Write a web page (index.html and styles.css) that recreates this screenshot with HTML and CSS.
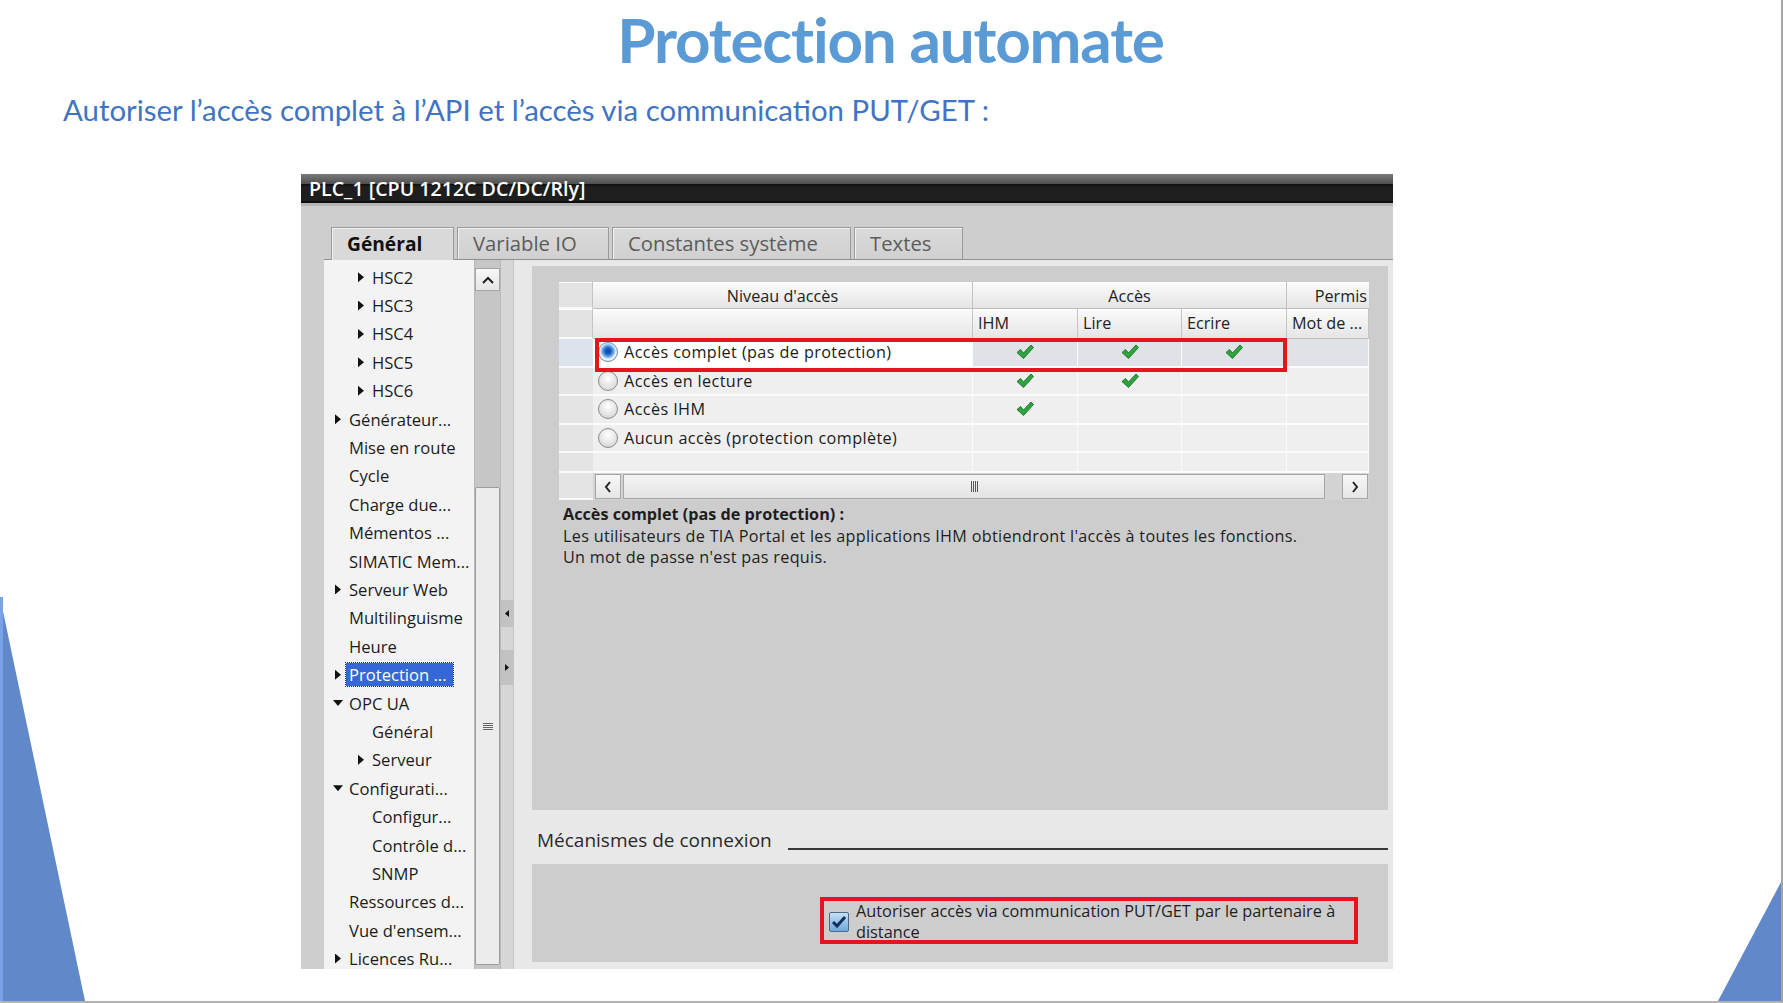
FILE: index.html
```html
<!DOCTYPE html>
<html>
  <head>
    <meta charset="utf-8">
    <title>Protection automate</title>
    <link rel="stylesheet" href="styles.css">
  </head>
  <body>
    <div class="slide">
      <h1 class="title">Protection automate</h1>
      <p class="lead">Autoriser l’accès complet à l’API et l’accès via communication PUT/GET :</p>

      <div class="shot">
        <div class="titlebar">PLC_1 [CPU 1212C DC/DC/Rly]</div>

        <div class="tabs">
          <span class="tab tab-general active">Général</span>
          <span class="tab tab-io">Variable IO</span>
          <span class="tab tab-const">Constantes système</span>
          <span class="tab tab-texts">Textes</span>
        </div>

        <div class="workspace">
          <ul class="tree">
            <li class="l2 closed">HSC2</li>
            <li class="l2 closed">HSC3</li>
            <li class="l2 closed">HSC4</li>
            <li class="l2 closed">HSC5</li>
            <li class="l2 closed">HSC6</li>
            <li class="closed">Générateur...</li>
            <li>Mise en route</li>
            <li>Cycle</li>
            <li>Charge due...</li>
            <li>Mémentos ...</li>
            <li>SIMATIC Mem...</li>
            <li class="closed">Serveur Web</li>
            <li>Multilinguisme</li>
            <li>Heure</li>
            <li class="closed"><span class="sel">Protection ...</span></li>
            <li class="open">OPC UA</li>
            <li class="l2">Général</li>
            <li class="l2 closed">Serveur</li>
            <li class="open">Configurati...</li>
            <li class="l2">Configur...</li>
            <li class="l2">Contrôle d...</li>
            <li class="l2">SNMP</li>
            <li>Ressources d...</li>
            <li>Vue d'ensem...</li>
            <li class="closed">Licences Ru...</li>
          </ul>

          <div class="vscroll">
            <span class="sbtn up">
              <svg width="14" height="10" viewBox="0 0 14 10"><polyline points="2,8 7,3 12,8" fill="none" stroke="#222" stroke-width="2"/></svg>
            </span>
            <span class="track"></span>
            <span class="thumb">
              <svg width="10" height="9" viewBox="0 0 10 9"><path d="M0 1.5H10M0 3.5H10M0 5.5H10M0 7.5H10" stroke="#666" stroke-width="1"/></svg>
            </span>
          </div>

          <div class="splitter">
            <span class="grab grab-left"></span>
            <span class="grab grab-right"></span>
          </div>

          <div class="content">
            <div class="panel panel-top">
              <div class="grid-wrap">
                <div class="grid">
                  <div class="hc rh"></div>
                  <div class="hc center">Niveau d'accès</div>
                  <div class="hc center span3">Accès</div>
                  <div class="hc right">Permis</div>

                  <div class="hc rh"></div>
                  <div class="hc"></div>
                  <div class="hc">IHM</div>
                  <div class="hc">Lire</div>
                  <div class="hc">Ecrire</div>
                  <div class="hc">Mot de ...</div>

                  <div class="rh sel-row"></div>
                  <div class="dc level sel-first"><span class="radio on"></span>Accès complet (pas de protection)</div>
                  <div class="dc sel-row tickc"><svg class="tick" viewBox="0 0 18 16"><path d="M1 8.5 4.5 5.5 7.5 9 15 1 17.5 3.5 7.5 14.5Z"/></svg></div>
                  <div class="dc sel-row tickc"><svg class="tick" viewBox="0 0 18 16"><path d="M1 8.5 4.5 5.5 7.5 9 15 1 17.5 3.5 7.5 14.5Z"/></svg></div>
                  <div class="dc sel-row tickc"><svg class="tick" viewBox="0 0 18 16"><path d="M1 8.5 4.5 5.5 7.5 9 15 1 17.5 3.5 7.5 14.5Z"/></svg></div>
                  <div class="dc sel-row"></div>

                  <div class="rh"></div>
                  <div class="dc level"><span class="radio"></span>Accès en lecture</div>
                  <div class="dc tickc"><svg class="tick" viewBox="0 0 18 16"><path d="M1 8.5 4.5 5.5 7.5 9 15 1 17.5 3.5 7.5 14.5Z"/></svg></div>
                  <div class="dc tickc"><svg class="tick" viewBox="0 0 18 16"><path d="M1 8.5 4.5 5.5 7.5 9 15 1 17.5 3.5 7.5 14.5Z"/></svg></div>
                  <div class="dc"></div>
                  <div class="dc"></div>

                  <div class="rh"></div>
                  <div class="dc level"><span class="radio"></span>Accès IHM</div>
                  <div class="dc tickc"><svg class="tick" viewBox="0 0 18 16"><path d="M1 8.5 4.5 5.5 7.5 9 15 1 17.5 3.5 7.5 14.5Z"/></svg></div>
                  <div class="dc"></div>
                  <div class="dc"></div>
                  <div class="dc"></div>

                  <div class="rh"></div>
                  <div class="dc level"><span class="radio"></span>Aucun accès (protection complète)</div>
                  <div class="dc"></div>
                  <div class="dc"></div>
                  <div class="dc"></div>
                  <div class="dc"></div>

                  <div class="rh"></div>
                  <div class="dc"></div>
                  <div class="dc"></div>
                  <div class="dc"></div>
                  <div class="dc"></div>
                  <div class="dc"></div>

                  <div class="rh"></div>
                  <div class="hscroll">
                    <span class="sbtn">
                      <svg width="10" height="14" viewBox="0 0 10 14"><polyline points="7,2 3,7 7,12" fill="none" stroke="#222" stroke-width="2"/></svg>
                    </span>
                    <span class="hthumb">
                      <svg width="9" height="11" viewBox="0 0 9 11"><path d="M1.5 0V11M3.5 0V11M5.5 0V11M7.5 0V11" stroke="#555" stroke-width="1"/></svg>
                    </span>
                    <span class="hgap"></span>
                    <span class="sbtn">
                      <svg width="10" height="14" viewBox="0 0 10 14"><polyline points="3,2 7,7 3,12" fill="none" stroke="#222" stroke-width="2"/></svg>
                    </span>
                  </div>
                </div>
                <span class="mark mark-row"></span>
              </div>

              <div class="desc">
                <b>Accès complet (pas de protection) :</b><br>
                Les utilisateurs de TIA Portal et les applications IHM obtiendront l'accès à toutes les fonctions.<br>
                Un mot de passe n'est pas requis.
              </div>
            </div>

            <div class="section-head">
              <span>Mécanismes de connexion</span>
              <span class="rule"></span>
            </div>

            <div class="panel panel-bottom">
              <div class="mark-box">
                <span class="checkbox">
                  <svg width="20" height="20" viewBox="0 0 20 20"><path d="M4 10 8 14 16 5" fill="none" stroke="#12305e" stroke-width="3"/></svg>
                </span>
                <span class="cb-label">Autoriser accès via communication PUT/GET par le partenaire à distance</span>
              </div>
            </div>
          </div>
        </div>
      </div>

      <svg class="deco" width="1781" height="1001" viewBox="0 0 1781 1001">
        <polygon points="0,597 85,1001 0,1001" fill="#6188c9"/>
        <rect x="0" y="597" width="3" height="404" fill="#7aa2e6"/>
        <polygon points="1781,882 1781,1001 1718,1001" fill="#6188c9"/>
      </svg>
    </div>
  </body>
</html>
```

FILE: styles.css
```css
html, body {
  margin: 0;
  background: #fff;
}
body {
  width: 1783px;
  height: 1003px;
  overflow: hidden;
}
.slide {
  position: relative;
  width: 1781px;
  height: 1001px;
  border-right: 2px solid #a5a5a5;
  border-bottom: 2px solid #b3b3b3;
  overflow: hidden;
}
.deco {
  position: absolute;
  left: 0;
  top: 0;
  pointer-events: none;
}

.title {
  margin: 0;
  padding-top: 8px;
  font-family: Lato, "Open Sans", sans-serif;
  font-weight: 700;
  font-size: 62px;
  line-height: 62px;
  letter-spacing: -1.2px;
  color: #5b9bd5;
  text-align: center;
}
.lead {
  margin: 23px 0 0 63px;
  font-family: Lato, "Open Sans", sans-serif;
  font-size: 29.4px;
  line-height: 33px;
  color: #3f74c4;
}

/* TIA portal screenshot */
.shot {
  margin: 48px 0 0 301px;
  width: 1092px;
  height: 795px;
  display: flex;
  flex-direction: column;
  background: #cecece;
  font-family: "Open Sans", sans-serif;
  color: #1b1b1b;
  overflow: hidden;
}
.titlebar {
  flex: none;
  height: 29px;
  line-height: 29px;
  padding-left: 8px;
  background: linear-gradient(#7a7a7a 0, #4f4f4f 10px, #121212 10px, #121212 12px, #1e1e1e 12px, #1e1e1e 27px, #0d0d0d 27px);
  border-bottom: 3px solid #b6b6b6;
  color: #fff;
  font-weight: 600;
  font-size: 19.6px;
}
.tabs {
  flex: none;
  display: flex;
  gap: 3px;
  margin-left: 23px;
  padding: 21px 0 0 7px;
  border-bottom: 1px solid #8f8f8f;
}
.tab {
  box-sizing: border-box;
  height: 32px;
  padding-left: 15px;
  border: 1px solid #9a9a9a;
  border-bottom: none;
  background: linear-gradient(#dadada, #d0d0d0);
  box-shadow: inset 1px 1px 0 #f2f2f2;
  font-size: 20.3px;
  line-height: 31px;
  color: #5c5c5c;
  white-space: nowrap;
}
.tab.active {
  height: 33px;
  margin-bottom: -1px;
  background: #d9d9d9;
  color: #111;
  font-weight: 700;
  font-size: 19.2px;
}
.tab-general { width: 123px; }
.tab-io { width: 152px; }
.tab-const { width: 239px; }
.tab-texts { width: 109px; }

.workspace {
  flex: 1;
  display: flex;
  margin-left: 23px;
  min-height: 0;
}

/* project tree */
.tree {
  flex: none;
  width: 150px;
  margin: 0;
  padding: 3px 0 0;
  list-style: none;
  background: #f3f3f3;
  font-size: 16.6px;
  overflow: hidden;
}
.tree li {
  display: flex;
  align-items: center;
  height: 28.4px;
  padding-left: 11px;
  white-space: nowrap;
}
.tree li.l2 {
  padding-left: 34px;
}
.tree li::before {
  content: "";
  flex: none;
  width: 6px;
  height: 10px;
  margin-right: 8px;
}
.tree li.closed::before {
  background: #111;
  clip-path: polygon(0 0, 100% 50%, 0 100%);
}
.tree li.open::before {
  width: 10px;
  height: 6px;
  margin-left: -2px;
  margin-right: 6px;
  background: #111;
  clip-path: polygon(0 0, 100% 0, 50% 100%);
}
.tree .sel {
  margin-left: -3px;
  padding: 0 6px 0 3px;
  line-height: 23px;
  background: #3567d6;
  color: #fff;
  outline: 1px dotted #1c2f66;
}

.vscroll {
  flex: none;
  width: 25px;
  display: flex;
  flex-direction: column;
  background: #c6c6c6;
  border-left: 1px solid #b8b8b8;
}
.sbtn {
  flex: none;
  display: flex;
  align-items: center;
  justify-content: center;
  box-sizing: border-box;
  background: linear-gradient(#f7f7f7, #e6e6e6);
  border: 1px solid #a5a5a5;
}
.vscroll .up {
  height: 23px;
  margin-top: 8px;
}
.vscroll .track {
  flex: none;
  height: 196px;
}
.vscroll .thumb {
  flex: none;
  height: 478px;
  display: flex;
  align-items: center;
  justify-content: center;
  box-sizing: border-box;
  background: #ececec;
  border: 1px solid #9d9d9d;
  border-radius: 2px;
}

.splitter {
  flex: none;
  width: 12px;
  display: flex;
  flex-direction: column;
  background: #d6d6d6;
  border-left: 1px solid #b9b9b9;
  border-right: 1px solid #c4c4c4;
}
.grab {
  flex: none;
  height: 27px;
  background: #c2c2c2;
  display: flex;
  align-items: center;
  justify-content: center;
}
.grab::before {
  content: "";
  width: 4px;
  height: 7px;
  background: #111;
}
.grab-left {
  margin-top: 340px;
}
.grab-left::before {
  clip-path: polygon(100% 0, 0 50%, 100% 100%);
}
.grab-right {
  margin-top: 23px;
  height: 35px;
}
.grab-right::before {
  clip-path: polygon(0 0, 100% 50%, 0 100%);
}

/* right side */
.content {
  flex: 1;
  display: flex;
  flex-direction: column;
  padding: 6px 6px 7px 18px;
  background: #e8e8e8;
}
.panel {
  background: #cdcdcd;
  flex: none;
}
.panel-top {
  height: 544px;
  box-sizing: border-box;
  padding: 16px 19px 0 27px;
}
.grid-wrap {
  position: relative;
  width: 810px;
}
.grid {
  display: grid;
  grid-template-columns: 34px 380px 105px 104px 105px 82px;
  grid-template-rows: 27px 30px 28.5px 28.5px 28.5px 28.5px 20px 27px;
  font-size: 16.2px;
  letter-spacing: 0.4px;
  background: #f0f0f0;
}
.hc {
  box-sizing: border-box;
  padding: 0 5px;
  background: linear-gradient(#fbfbfb, #e5e5e5);
  border-right: 1px solid #c4c4c4;
  border-bottom: 1px solid #bdbdbd;
  box-shadow: inset 0 1px 0 #fff;
  line-height: 28px;
  white-space: nowrap;
  overflow: hidden;
  color: #222;
  letter-spacing: 0;
}
.hc.rh {
  background: #e3e3e3;
}
.hc.center {
  text-align: center;
}
.hc.right {
  text-align: right;
  padding-right: 2px;
  border-right: none;
}
.span3 {
  grid-column: span 3;
}
.rh {
  background: #e4e4e4;
  border-bottom: 2px solid #f9f9f9;
  box-sizing: border-box;
}
.dc {
  box-sizing: border-box;
  background: #efefef;
  border-right: 1px solid #fbfbfb;
  border-bottom: 2px solid #fbfbfb;
  display: flex;
  align-items: center;
  white-space: nowrap;
}
.rh.sel-row {
  background: #dce3ec;
}
.dc.sel-row {
  background: #dfe2e7;
}
.dc.sel-first {
  background: #fff;
}
.level {
  padding-left: 5px;
}
.tickc {
  justify-content: center;
}
.tick {
  width: 18px;
  height: 16px;
  fill: #2fa33d;
  stroke: #17702a;
  stroke-width: 0.9;
}
.radio {
  flex: none;
  box-sizing: border-box;
  width: 20px;
  height: 20px;
  margin-right: 6px;
  border-radius: 50%;
  border: 1px solid #8a8a8a;
  background: radial-gradient(circle at 50% 35%, #ffffff 0, #e9e9e9 45%, #cfcfcf 100%);
}
.radio.on {
  border-color: #6f8aa8;
  background: radial-gradient(circle at 50% 45%, #0f3f9c 0, #1f5fc0 3px, #4c97e4 5px, #a9d2f5 7px, #f4f4f4 8px, #dcdcdc 100%);
}
.hscroll {
  grid-column: span 5;
  display: flex;
  align-items: stretch;
  padding: 1px 1px 1px 2px;
  background: #d3d3d3;
}
.hscroll .sbtn {
  width: 26px;
}
.hthumb {
  flex: 1;
  display: flex;
  align-items: center;
  justify-content: center;
  margin-left: 2px;
  background: linear-gradient(#f4f4f4, #e3e3e3);
  border: 1px solid #a5a5a5;
  box-sizing: border-box;
}
.hgap {
  flex: none;
  width: 17px;
}
.mark {
  position: absolute;
  box-sizing: border-box;
  border: 4px solid #e5141d;
  pointer-events: none;
}
.mark-row {
  left: 36px;
  top: 56px;
  width: 692px;
  height: 34px;
}
.desc {
  margin-top: 4px;
  padding-left: 4px;
  font-size: 16.2px;
  line-height: 21.5px;
  letter-spacing: 0.3px;
  color: #1e1e1e;
}
.desc b {
  font-weight: 700;
  letter-spacing: 0;
}

.section-head {
  flex: none;
  height: 54px;
  box-sizing: border-box;
  display: flex;
  align-items: flex-end;
  padding: 0 0 12px 5px;
  font-size: 19px;
  line-height: 24px;
  color: #2a2a2a;
}
.section-head .rule {
  flex: 1;
  margin: 0 0 2px 16px;
  border-top: 2px solid #383838;
}
.panel-bottom {
  height: 98px;
  box-sizing: border-box;
  padding: 33px 0 0 288px;
}
.mark-box {
  box-sizing: border-box;
  width: 538px;
  height: 47px;
  display: flex;
  align-items: flex-start;
  padding: 0 2px 0 5px;
  border: 4px solid #e5141d;
}
.checkbox {
  flex: none;
  box-sizing: border-box;
  width: 20px;
  height: 20px;
  margin: 11px 7px 0 0;
  border: 1px solid #4d6a86;
  border-radius: 2px;
  background: linear-gradient(#c6e0f5, #6ea9dc);
}
.checkbox svg {
  display: block;
  margin: -1px;
}
.cb-label {
  font-size: 16.3px;
  line-height: 21px;
  color: #1e1e1e;
}
```
